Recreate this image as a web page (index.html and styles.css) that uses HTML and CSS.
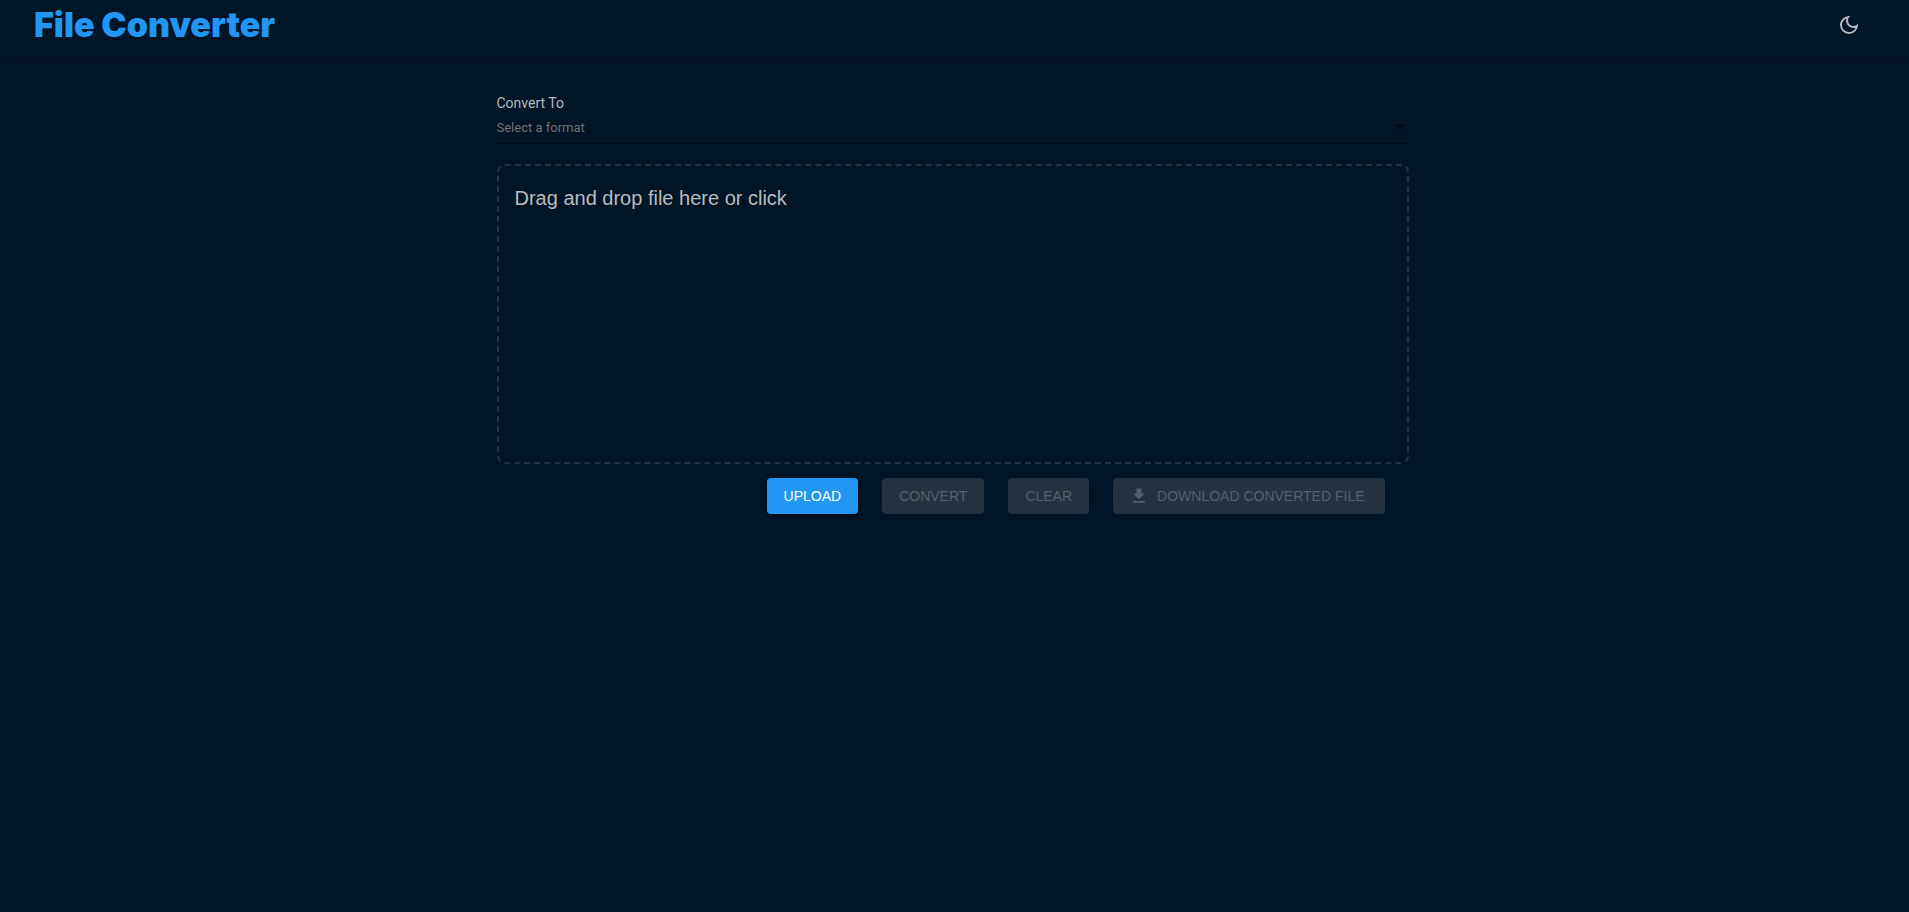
FILE: index.html
```html
<!DOCTYPE html>
<html lang="en">
<head>
<meta charset="utf-8">
<meta name="viewport" content="width=device-width, initial-scale=1">
<title>File Converter</title>
<link rel="stylesheet" href="styles.css">
</head>
<body>
<header class="app-bar">
  <h1 class="brand">File Converter</h1>
  <button class="theme-toggle" type="button" aria-label="Toggle dark mode">
    <svg viewBox="0 0 24 24" width="24" height="24" aria-hidden="true"><path fill="currentColor" d="M9.37 5.51A7.35 7.35 0 0 0 9.1 7.5c0 4.08 3.32 7.4 7.4 7.4.68 0 1.35-.09 1.99-.27A7.014 7.014 0 0 1 12 19c-3.86 0-7-3.14-7-7 0-2.93 1.81-5.45 4.37-6.49zM12 3a9 9 0 1 0 9 9c0-.46-.04-.92-.1-1.36a5.389 5.389 0 0 1-4.4 2.26 5.403 5.403 0 0 1-3.14-9.8c-.44-.06-.9-.1-1.36-.1z"/></svg>
  </button>
</header>
<main class="container">
  <div class="field">
    <label class="field-label" for="format">Convert To</label>
    <div class="select-wrap">
      <select class="format-select" id="format">
        <option>Select a format</option>
      </select>
    </div>
  </div>
  <button class="dropzone" type="button">Drag and drop file here or click</button>
  <div class="actions">
    <button class="btn btn-primary" type="button">UPLOAD</button>
    <button class="btn" type="button" disabled>CONVERT</button>
    <button class="btn" type="button" disabled>CLEAR</button>
    <button class="btn btn-download" type="button" disabled>
      <svg class="btn-icon" viewBox="0 0 24 24" width="20" height="20" aria-hidden="true"><path fill="currentColor" d="M19 9h-4V3H9v6H5l7 7 7-7zM5 18v2h14v-2H5z"/></svg>
      DOWNLOAD CONVERTED FILE
    </button>
  </div>
</main>
</body>
</html>
```
FILE: styles.css
```css
* {
  box-sizing: border-box;
}

body {
  margin: 0;
  min-height: 100vh;
  background: #001526;
  color: #b8bbbe;
  font-family: "Liberation Sans", Arial, sans-serif;
}

.app-bar {
  display: flex;
  align-items: center;
  justify-content: space-between;
  padding: 0 48px 8px 34px;
  min-height: 57px;
  box-shadow: 0 2px 4px rgba(0, 0, 0, 0.3);
}

.brand {
  margin: 0;
  color: #2196f3;
  font-family: "Arial Black", Inter, sans-serif;
  font-size: 34px;
  font-weight: 900;
  line-height: 48px;
}

.theme-toggle {
  display: flex;
  padding: 0;
  border: 0;
  background: none;
  color: #b8bbbe;
}

.theme-toggle svg {
  display: block;
}

.container {
  width: 100%;
  max-width: 960px;
  margin: 0 auto;
  padding: 36px 26px 0 22px;
}

.field {
  display: flex;
  flex-direction: column;
  font-family: Roboto, sans-serif;
}

.field-label {
  font-size: 14px;
  line-height: 20px;
}

.select-wrap {
  position: relative;
  border-bottom: 1px solid #000b15;
}

.select-wrap::after {
  content: "";
  position: absolute;
  top: 11px;
  right: 3px;
  border: 6px solid transparent;
  border-top-color: #000a12;
  border-bottom: 0;
}

.format-select {
  display: block;
  width: 100%;
  height: 30px;
  padding: 0 24px 2px 0;
  border: 0;
  appearance: none;
  background: none;
  color: #717375;
  font-family: inherit;
  font-size: 13px;
}

.dropzone {
  display: flex;
  align-items: flex-start;
  width: 100%;
  min-height: 300px;
  margin-top: 20px;
  padding: 20px 16px;
  border: 2px dashed #22323f;
  border-radius: 8px;
  background: none;
  color: inherit;
  font-family: inherit;
  font-size: 20px;
  line-height: 24px;
}

.actions {
  display: flex;
  justify-content: flex-end;
  gap: 24px;
  padding: 14px 24px 0 0;
}

.btn {
  display: flex;
  align-items: center;
  gap: 8px;
  min-height: 36px;
  padding: 0 17px;
  border: 0;
  border-radius: 4px;
  background: #22323f;
  color: #55606c;
  font-family: inherit;
  font-size: 14px;
}

.btn-download {
  padding: 0 20px;
}

.btn-primary {
  background: #2196f3;
  color: #fff;
  box-shadow: 0 2px 3px rgba(0, 0, 0, 0.4);
}

.btn-icon {
  margin-left: -4px;
}
```
